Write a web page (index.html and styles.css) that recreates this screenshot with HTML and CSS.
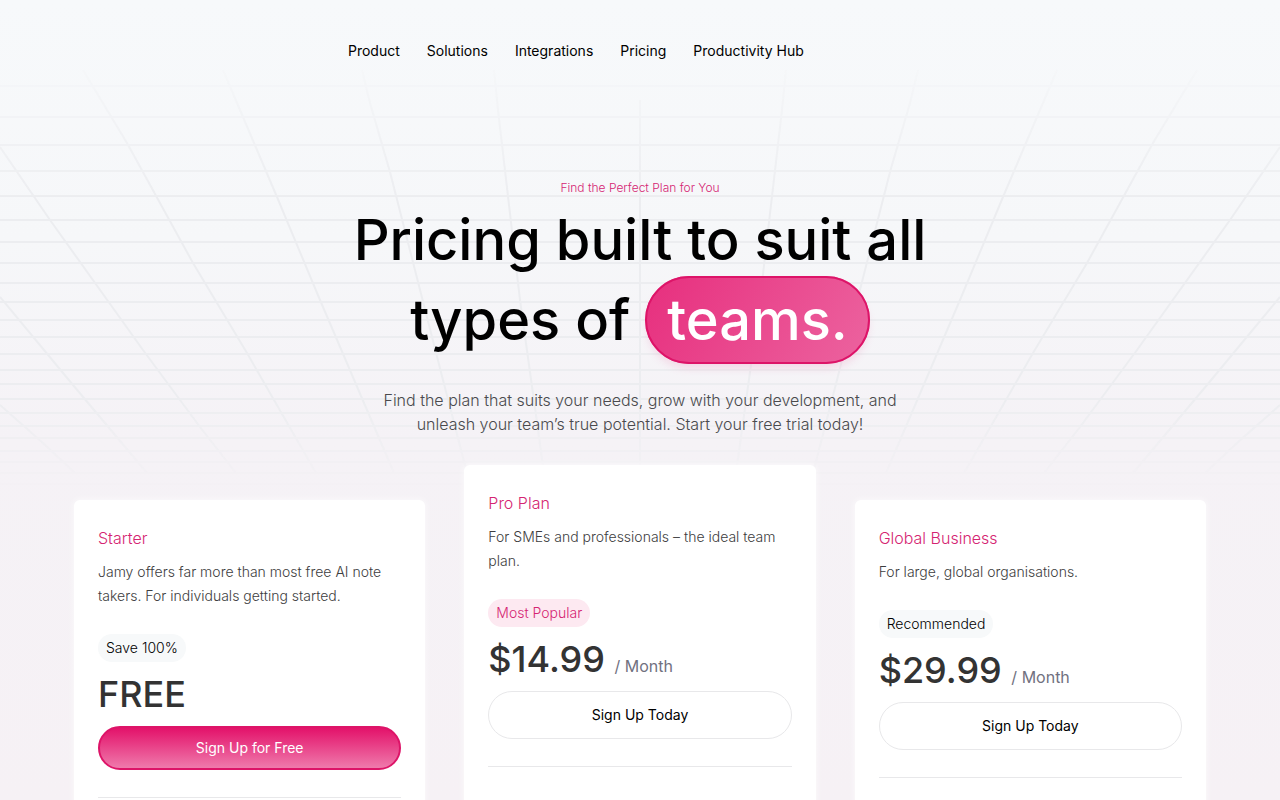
FILE: index.html
```html
<!DOCTYPE html>
<html lang="en">
<head>
<meta charset="utf-8">
<meta name="viewport" content="width=device-width, initial-scale=1">
<title>Pricing</title>
<link rel="stylesheet" href="styles.css">
</head>
<body>
<div class="page">
  <svg class="grid" viewBox="0 0 1280 500" preserveAspectRatio="none" aria-hidden="true">
    <defs>
      <linearGradient id="fade" x1="0" y1="0" x2="0" y2="1">
        <stop offset="0.11" stop-color="#fff" stop-opacity="0"/>
        <stop offset="0.4" stop-color="#fff"/>
        <stop offset="0.8" stop-color="#fff"/>
        <stop offset="0.98" stop-color="#fff" stop-opacity="0"/>
      </linearGradient>
      <mask id="mask" maskUnits="userSpaceOnUse" x="0" y="0" width="1280" height="500"><rect width="1280" height="500" fill="url(#fade)"/></mask>
      <g id="rays">
        <path d="M0 405L43 443L75 473"/>
        <path d="M0 297L73 385L147 473"/>
        <path d="M0 147L50 220L143 350L200 427L236 473"/>
        <path d="M83 70L127 143L193 263L247 353L316 473"/>
        <path d="M223 70L277 197L320 300L370 417L394 473"/>
        <path d="M362 70L370 103L390 172L443 380L467 473"/>
        <path d="M494 70L498 110L520 300L544 473"/>
      </g>
    </defs>
    <g mask="url(#mask)" fill="none" stroke="#ecedf0" stroke-width="2">
      <path d="M0 86H1280M0 117H1280M0 145H1280M0 171H1280M0 196H1280M0 220H1280M0 242H1280M0 263H1280M0 283H1280M0 302H1280M0 320H1280M0 337H1280M0 354H1280M0 370H1280M0 384H1280M0 399H1280M0 413H1280M0 426H1280M0 438H1280M0 451H1280M0 462H1280M0 473H1280M0 484H1280"/>
      <use href="#rays"/>
      <use href="#rays" transform="translate(1280 0) scale(-1 1)"/>
      <path d="M640 100V480"/>
    </g>
  </svg>
  <header class="header">
    <nav class="nav" aria-label="Main">
      <a href="#">Product</a>
      <a href="#">Solutions</a>
      <a href="#">Integrations</a>
      <a href="#">Pricing</a>
      <a href="#">Productivity Hub</a>
    </nav>
  </header>
  <main>
    <section class="hero">
      <p class="eyebrow">Find the Perfect Plan for You</p>
      <h1 class="title">Pricing built to suit all<br>types of <span class="pill">teams.</span></h1>
      <p class="lead">Find the plan that suits your needs, grow with your development, and unleash your team’s true potential. Start your free trial today!</p>
    </section>
    <section class="plans" aria-label="Plans">
      <article class="card">
        <h2 class="name">Starter</h2>
        <p class="desc">Jamy offers far more than most free AI note takers. For individuals getting started.</p>
        <span class="tag">Save 100%</span>
        <p class="price">FREE</p>
        <button class="btn btn-primary" type="button">Sign Up for Free</button>
        <hr class="rule">
      </article>
      <article class="card card-featured">
        <h2 class="name">Pro Plan</h2>
        <p class="desc">For SMEs and professionals – the ideal team plan.</p>
        <span class="tag tag-pink">Most Popular</span>
        <p class="price">$14.99 <span class="per">/ Month</span></p>
        <button class="btn" type="button">Sign Up Today</button>
        <hr class="rule">
      </article>
      <article class="card">
        <h2 class="name">Global Business</h2>
        <p class="desc">For large, global organisations.</p>
        <span class="tag">Recommended</span>
        <p class="price">$29.99 <span class="per">/ Month</span></p>
        <button class="btn" type="button">Sign Up Today</button>
        <hr class="rule">
      </article>
    </section>
  </main>
</div>
</body>
</html>
```
FILE: styles.css
```css
* { box-sizing: border-box; }
body {
  margin: 0;
  font-family: Inter, "Liberation Sans", sans-serif;
  color: #000;
}
h1, h2, p { margin: 0; }
.page {
  position: relative;
  height: 100vh;
  overflow: hidden;
  background: linear-gradient(#f7f9fb, #f6f7f9 30%, #f5f2f6 55%, #f6f1f5);
}
.grid {
  position: absolute;
  inset: 0 0 auto;
  width: 100%;
  height: 500px;
}
.header, main { position: relative; }
.header {
  max-width: 1132px;
  margin: 0 auto;
  padding: 40px 0;
}
.nav {
  display: flex;
  gap: 27px;
  padding-left: 274px;
  font-size: 14px;
  line-height: 22px;
}
.nav a {
  color: #000;
  text-decoration: none;
}
.hero {
  padding-top: 76px;
  text-align: center;
}
.eyebrow {
  color: #d52472;
  font-size: 12px;
  font-weight: 300;
  line-height: 20px;
}
.title {
  padding-top: 2px;
  font-size: 56px;
  font-weight: 500;
  line-height: 80px;
}
.pill {
  padding: 8px 20px;
  border: 2px solid #dd1468;
  border-radius: 44px;
  background: linear-gradient(120deg, #e72f7e, #ec639f);
  box-shadow: 0 6px 8px -2px #ec639f33;
  color: #fff;
}
.lead {
  max-width: 560px;
  margin: 0 auto;
  padding-top: 28px;
  color: #4a4a4d;
  font-size: 16px;
  font-weight: 300;
  line-height: 24px;
}
.plans {
  display: grid;
  grid-template-columns: repeat(3, 1fr);
  gap: 39px;
  max-width: 1132px;
  margin: 0 auto;
  padding-top: 64px;
  align-items: start;
}
.card {
  min-height: 480px;
  padding: 24px;
  border-radius: 6px;
  background: #fff;
  box-shadow: 0 0 6px 1px #ffffff99;
}
.card-featured { margin-top: -35px; }
.name {
  color: #d52472;
  font-size: 16px;
  font-weight: 300;
  line-height: 28px;
}
.desc {
  padding: 8px 0 26px;
  color: #3d3d40;
  font-size: 14px;
  font-weight: 300;
  line-height: 24px;
}
.tag {
  display: inline-block;
  padding: 0 8px;
  border-radius: 14px;
  background: #f7f9fa;
  font-size: 14px;
  font-weight: 300;
  line-height: 28px;
}
.tag-pink {
  background: #fde9f1;
  color: #d52472;
}
.price {
  padding: 8px 0;
  color: #333;
  font-size: 36px;
  font-weight: 500;
  line-height: 48px;
}
.per {
  color: #71717f;
  font-size: 16px;
  font-weight: 400;
  line-height: 16px;
}
.btn {
  display: block;
  width: 100%;
  padding: 12px;
  border: 1px solid #e8e8ea;
  border-radius: 24px;
  background: #fff;
  color: #000;
  font: 400 14px/22px Inter, "Liberation Sans", sans-serif;
}
.btn-primary {
  padding: 9px;
  border: 2px solid #dd1468;
  background: linear-gradient(#e3126a, #ef7aac);
  color: #fff;
}
.rule {
  height: 1px;
  margin: 27px 0 0;
  border: 0;
  background: #e8e8ea;
}
```
